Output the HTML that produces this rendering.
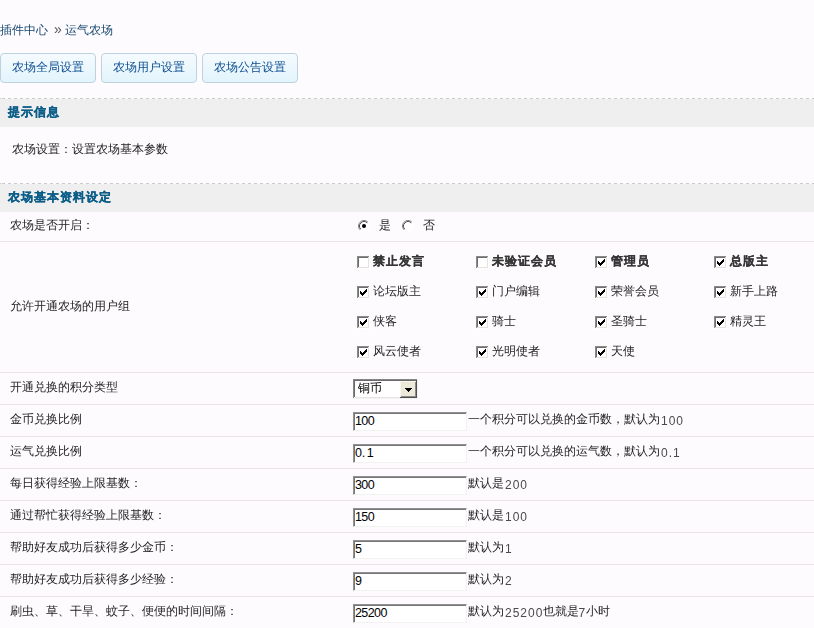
<!DOCTYPE html>
<html><head><meta charset="utf-8">
<style>
*{margin:0;padding:0;box-sizing:border-box}
html,body{width:814px;height:628px;overflow:hidden;background:#FEFBFE}
body{font-family:"Liberation Sans",sans-serif;font-size:12px;line-height:12px;color:#242424;position:relative}
.a{position:absolute;white-space:nowrap;will-change:transform}
.crumb{left:0;top:24px;color:#174870}
.sep{color:#555;font-size:14px;line-height:14px}
.btn{position:absolute;top:53px;height:30px;border:1px solid #BDD2DE;border-radius:4px;background:linear-gradient(#F5FBFE,#E2F4FC);color:#0E4E92;padding:7px 0 0 11px;will-change:transform;white-space:nowrap}
.band{position:absolute;left:0;width:814px;background:#F0EFEF}
.dash{position:absolute;left:0;width:814px;height:1px;background:repeating-linear-gradient(90deg,#CACACA 0 3px,transparent 3px 6px);background-position:2px 0}
.band span{position:absolute;left:8px;font-weight:bold;color:#0C5E88;letter-spacing:1px;will-change:transform;-webkit-text-stroke:0.3px #0C5E88}
.line{position:absolute;left:0;width:814px;height:1px;background:#E8E4E8}
.lbl{left:10px}
.b{font-weight:bold;letter-spacing:1px;color:#363636;-webkit-text-stroke:0.2px #363636}
.inp{position:absolute;left:353px;width:114px;height:19px;background:#fff;border-top:1px solid #919191;border-left:1px solid #919191;border-right:1px solid #F4F2F0;border-bottom:1px solid #F4F2F0;box-shadow:inset 1px 1px 0 #767676}
.inp>span{position:absolute;left:1px;top:2px;color:#000;letter-spacing:-0.6px;font-size:12.5px}
.sfx{left:468px}
.n{letter-spacing:1px;margin-left:1px;position:relative;top:2px;color:#4a4a4a}
</style></head><body>
<div class="a crumb">插件中心</div><div class="a sep" style="left:54px;top:22px">»</div><div class="a crumb" style="left:65px">运气农场</div>
<div class="btn" style="left:0;width:96px">农场全局设置</div>
<div class="btn" style="left:101px;width:96px">农场用户设置</div>
<div class="btn" style="left:202px;width:96px">农场公告设置</div>

<div class="dash" style="top:98px"></div><div class="band" style="top:99px;height:28px"><span style="top:7px">提示信息</span></div>
<div class="a" style="left:12px;top:143px">农场设置：设置农场基本参数</div>

<div class="dash" style="top:183px"></div><div class="band" style="top:184px;height:28px"><span style="top:7px">农场基本资料设定</span></div>

<div class="a lbl" style="top:219px">农场是否开启：</div>
<div class="a" style="left:358px;top:220px"><svg width="12" height="12" viewBox="0 0 12 12" style="display:block"><circle cx="6" cy="6" r="5.5" fill="#fff"/><path d="M2.11 9.89A5.5 5.5 0 0 1 9.89 2.11" stroke="#808080" stroke-width="1" fill="none"/><path d="M2.82 9.18A4.5 4.5 0 0 1 9.18 2.82" stroke="#505050" stroke-width="1" fill="none"/><circle cx="6" cy="6" r="2" fill="#000"/></svg></div>
<div class="a" style="left:379px;top:219px">是</div>
<div class="a" style="left:402px;top:220px"><svg width="12" height="12" viewBox="0 0 12 12" style="display:block"><circle cx="6" cy="6" r="5.5" fill="#fff"/><path d="M2.11 9.89A5.5 5.5 0 0 1 9.89 2.11" stroke="#808080" stroke-width="1" fill="none"/><path d="M2.82 9.18A4.5 4.5 0 0 1 9.18 2.82" stroke="#505050" stroke-width="1" fill="none"/></svg></div>
<div class="a" style="left:423px;top:219px">否</div>
<div class="line" style="top:241px"></div>
<div class="a lbl" style="top:300px">允许开通农场的用户组</div>
<div class="a" style="left:357px;top:256px"><svg width="13" height="13" viewBox="0 0 13 13" shape-rendering="crispEdges" style="display:block"><rect x="0" y="0" width="13" height="13" fill="#fff"/><rect x="0" y="0" width="12" height="1" fill="#8a8a8a"/><rect x="0" y="0" width="1" height="12" fill="#8a8a8a"/><rect x="1" y="1" width="10" height="1" fill="#6e6e6e"/><rect x="1" y="1" width="1" height="10" fill="#6e6e6e"/><rect x="1" y="11" width="11" height="1" fill="#E6E3DC"/><rect x="11" y="1" width="1" height="11" fill="#E6E3DC"/></svg></div><div class="a lb b" style="left:373px;top:255px">禁止发言</div>
<div class="a" style="left:476px;top:256px"><svg width="13" height="13" viewBox="0 0 13 13" shape-rendering="crispEdges" style="display:block"><rect x="0" y="0" width="13" height="13" fill="#fff"/><rect x="0" y="0" width="12" height="1" fill="#8a8a8a"/><rect x="0" y="0" width="1" height="12" fill="#8a8a8a"/><rect x="1" y="1" width="10" height="1" fill="#6e6e6e"/><rect x="1" y="1" width="1" height="10" fill="#6e6e6e"/><rect x="1" y="11" width="11" height="1" fill="#E6E3DC"/><rect x="11" y="1" width="1" height="11" fill="#E6E3DC"/></svg></div><div class="a lb b" style="left:492px;top:255px">未验证会员</div>
<div class="a" style="left:595px;top:256px"><svg width="13" height="13" viewBox="0 0 13 13" shape-rendering="crispEdges" style="display:block"><rect x="0" y="0" width="13" height="13" fill="#fff"/><rect x="0" y="0" width="12" height="1" fill="#8a8a8a"/><rect x="0" y="0" width="1" height="12" fill="#8a8a8a"/><rect x="1" y="1" width="10" height="1" fill="#6e6e6e"/><rect x="1" y="1" width="1" height="10" fill="#6e6e6e"/><rect x="1" y="11" width="11" height="1" fill="#E6E3DC"/><rect x="11" y="1" width="1" height="11" fill="#E6E3DC"/><path d="M9 3h1v1h-1zM8 4h2v1h-2zM3 5h1v1h-1zM7 5h3v1h-3zM3 6h2v1h-2zM6 6h3v1h-3zM3 7h5v1h-5zM4 8h3v1h-3zM5 9h1v1h-1z" fill="#000"/></svg></div><div class="a lb b" style="left:611px;top:255px">管理员</div>
<div class="a" style="left:714px;top:256px"><svg width="13" height="13" viewBox="0 0 13 13" shape-rendering="crispEdges" style="display:block"><rect x="0" y="0" width="13" height="13" fill="#fff"/><rect x="0" y="0" width="12" height="1" fill="#8a8a8a"/><rect x="0" y="0" width="1" height="12" fill="#8a8a8a"/><rect x="1" y="1" width="10" height="1" fill="#6e6e6e"/><rect x="1" y="1" width="1" height="10" fill="#6e6e6e"/><rect x="1" y="11" width="11" height="1" fill="#E6E3DC"/><rect x="11" y="1" width="1" height="11" fill="#E6E3DC"/><path d="M9 3h1v1h-1zM8 4h2v1h-2zM3 5h1v1h-1zM7 5h3v1h-3zM3 6h2v1h-2zM6 6h3v1h-3zM3 7h5v1h-5zM4 8h3v1h-3zM5 9h1v1h-1z" fill="#000"/></svg></div><div class="a lb b" style="left:730px;top:255px">总版主</div>
<div class="a" style="left:357px;top:286px"><svg width="13" height="13" viewBox="0 0 13 13" shape-rendering="crispEdges" style="display:block"><rect x="0" y="0" width="13" height="13" fill="#fff"/><rect x="0" y="0" width="12" height="1" fill="#8a8a8a"/><rect x="0" y="0" width="1" height="12" fill="#8a8a8a"/><rect x="1" y="1" width="10" height="1" fill="#6e6e6e"/><rect x="1" y="1" width="1" height="10" fill="#6e6e6e"/><rect x="1" y="11" width="11" height="1" fill="#E6E3DC"/><rect x="11" y="1" width="1" height="11" fill="#E6E3DC"/><path d="M9 3h1v1h-1zM8 4h2v1h-2zM3 5h1v1h-1zM7 5h3v1h-3zM3 6h2v1h-2zM6 6h3v1h-3zM3 7h5v1h-5zM4 8h3v1h-3zM5 9h1v1h-1z" fill="#000"/></svg></div><div class="a lb" style="left:373px;top:285px">论坛版主</div>
<div class="a" style="left:476px;top:286px"><svg width="13" height="13" viewBox="0 0 13 13" shape-rendering="crispEdges" style="display:block"><rect x="0" y="0" width="13" height="13" fill="#fff"/><rect x="0" y="0" width="12" height="1" fill="#8a8a8a"/><rect x="0" y="0" width="1" height="12" fill="#8a8a8a"/><rect x="1" y="1" width="10" height="1" fill="#6e6e6e"/><rect x="1" y="1" width="1" height="10" fill="#6e6e6e"/><rect x="1" y="11" width="11" height="1" fill="#E6E3DC"/><rect x="11" y="1" width="1" height="11" fill="#E6E3DC"/><path d="M9 3h1v1h-1zM8 4h2v1h-2zM3 5h1v1h-1zM7 5h3v1h-3zM3 6h2v1h-2zM6 6h3v1h-3zM3 7h5v1h-5zM4 8h3v1h-3zM5 9h1v1h-1z" fill="#000"/></svg></div><div class="a lb" style="left:492px;top:285px">门户编辑</div>
<div class="a" style="left:595px;top:286px"><svg width="13" height="13" viewBox="0 0 13 13" shape-rendering="crispEdges" style="display:block"><rect x="0" y="0" width="13" height="13" fill="#fff"/><rect x="0" y="0" width="12" height="1" fill="#8a8a8a"/><rect x="0" y="0" width="1" height="12" fill="#8a8a8a"/><rect x="1" y="1" width="10" height="1" fill="#6e6e6e"/><rect x="1" y="1" width="1" height="10" fill="#6e6e6e"/><rect x="1" y="11" width="11" height="1" fill="#E6E3DC"/><rect x="11" y="1" width="1" height="11" fill="#E6E3DC"/><path d="M9 3h1v1h-1zM8 4h2v1h-2zM3 5h1v1h-1zM7 5h3v1h-3zM3 6h2v1h-2zM6 6h3v1h-3zM3 7h5v1h-5zM4 8h3v1h-3zM5 9h1v1h-1z" fill="#000"/></svg></div><div class="a lb" style="left:611px;top:285px">荣誉会员</div>
<div class="a" style="left:714px;top:286px"><svg width="13" height="13" viewBox="0 0 13 13" shape-rendering="crispEdges" style="display:block"><rect x="0" y="0" width="13" height="13" fill="#fff"/><rect x="0" y="0" width="12" height="1" fill="#8a8a8a"/><rect x="0" y="0" width="1" height="12" fill="#8a8a8a"/><rect x="1" y="1" width="10" height="1" fill="#6e6e6e"/><rect x="1" y="1" width="1" height="10" fill="#6e6e6e"/><rect x="1" y="11" width="11" height="1" fill="#E6E3DC"/><rect x="11" y="1" width="1" height="11" fill="#E6E3DC"/><path d="M9 3h1v1h-1zM8 4h2v1h-2zM3 5h1v1h-1zM7 5h3v1h-3zM3 6h2v1h-2zM6 6h3v1h-3zM3 7h5v1h-5zM4 8h3v1h-3zM5 9h1v1h-1z" fill="#000"/></svg></div><div class="a lb" style="left:730px;top:285px">新手上路</div>
<div class="a" style="left:357px;top:316px"><svg width="13" height="13" viewBox="0 0 13 13" shape-rendering="crispEdges" style="display:block"><rect x="0" y="0" width="13" height="13" fill="#fff"/><rect x="0" y="0" width="12" height="1" fill="#8a8a8a"/><rect x="0" y="0" width="1" height="12" fill="#8a8a8a"/><rect x="1" y="1" width="10" height="1" fill="#6e6e6e"/><rect x="1" y="1" width="1" height="10" fill="#6e6e6e"/><rect x="1" y="11" width="11" height="1" fill="#E6E3DC"/><rect x="11" y="1" width="1" height="11" fill="#E6E3DC"/><path d="M9 3h1v1h-1zM8 4h2v1h-2zM3 5h1v1h-1zM7 5h3v1h-3zM3 6h2v1h-2zM6 6h3v1h-3zM3 7h5v1h-5zM4 8h3v1h-3zM5 9h1v1h-1z" fill="#000"/></svg></div><div class="a lb" style="left:373px;top:315px">侠客</div>
<div class="a" style="left:476px;top:316px"><svg width="13" height="13" viewBox="0 0 13 13" shape-rendering="crispEdges" style="display:block"><rect x="0" y="0" width="13" height="13" fill="#fff"/><rect x="0" y="0" width="12" height="1" fill="#8a8a8a"/><rect x="0" y="0" width="1" height="12" fill="#8a8a8a"/><rect x="1" y="1" width="10" height="1" fill="#6e6e6e"/><rect x="1" y="1" width="1" height="10" fill="#6e6e6e"/><rect x="1" y="11" width="11" height="1" fill="#E6E3DC"/><rect x="11" y="1" width="1" height="11" fill="#E6E3DC"/><path d="M9 3h1v1h-1zM8 4h2v1h-2zM3 5h1v1h-1zM7 5h3v1h-3zM3 6h2v1h-2zM6 6h3v1h-3zM3 7h5v1h-5zM4 8h3v1h-3zM5 9h1v1h-1z" fill="#000"/></svg></div><div class="a lb" style="left:492px;top:315px">骑士</div>
<div class="a" style="left:595px;top:316px"><svg width="13" height="13" viewBox="0 0 13 13" shape-rendering="crispEdges" style="display:block"><rect x="0" y="0" width="13" height="13" fill="#fff"/><rect x="0" y="0" width="12" height="1" fill="#8a8a8a"/><rect x="0" y="0" width="1" height="12" fill="#8a8a8a"/><rect x="1" y="1" width="10" height="1" fill="#6e6e6e"/><rect x="1" y="1" width="1" height="10" fill="#6e6e6e"/><rect x="1" y="11" width="11" height="1" fill="#E6E3DC"/><rect x="11" y="1" width="1" height="11" fill="#E6E3DC"/><path d="M9 3h1v1h-1zM8 4h2v1h-2zM3 5h1v1h-1zM7 5h3v1h-3zM3 6h2v1h-2zM6 6h3v1h-3zM3 7h5v1h-5zM4 8h3v1h-3zM5 9h1v1h-1z" fill="#000"/></svg></div><div class="a lb" style="left:611px;top:315px">圣骑士</div>
<div class="a" style="left:714px;top:316px"><svg width="13" height="13" viewBox="0 0 13 13" shape-rendering="crispEdges" style="display:block"><rect x="0" y="0" width="13" height="13" fill="#fff"/><rect x="0" y="0" width="12" height="1" fill="#8a8a8a"/><rect x="0" y="0" width="1" height="12" fill="#8a8a8a"/><rect x="1" y="1" width="10" height="1" fill="#6e6e6e"/><rect x="1" y="1" width="1" height="10" fill="#6e6e6e"/><rect x="1" y="11" width="11" height="1" fill="#E6E3DC"/><rect x="11" y="1" width="1" height="11" fill="#E6E3DC"/><path d="M9 3h1v1h-1zM8 4h2v1h-2zM3 5h1v1h-1zM7 5h3v1h-3zM3 6h2v1h-2zM6 6h3v1h-3zM3 7h5v1h-5zM4 8h3v1h-3zM5 9h1v1h-1z" fill="#000"/></svg></div><div class="a lb" style="left:730px;top:315px">精灵王</div>
<div class="a" style="left:357px;top:346px"><svg width="13" height="13" viewBox="0 0 13 13" shape-rendering="crispEdges" style="display:block"><rect x="0" y="0" width="13" height="13" fill="#fff"/><rect x="0" y="0" width="12" height="1" fill="#8a8a8a"/><rect x="0" y="0" width="1" height="12" fill="#8a8a8a"/><rect x="1" y="1" width="10" height="1" fill="#6e6e6e"/><rect x="1" y="1" width="1" height="10" fill="#6e6e6e"/><rect x="1" y="11" width="11" height="1" fill="#E6E3DC"/><rect x="11" y="1" width="1" height="11" fill="#E6E3DC"/><path d="M9 3h1v1h-1zM8 4h2v1h-2zM3 5h1v1h-1zM7 5h3v1h-3zM3 6h2v1h-2zM6 6h3v1h-3zM3 7h5v1h-5zM4 8h3v1h-3zM5 9h1v1h-1z" fill="#000"/></svg></div><div class="a lb" style="left:373px;top:345px">风云使者</div>
<div class="a" style="left:476px;top:346px"><svg width="13" height="13" viewBox="0 0 13 13" shape-rendering="crispEdges" style="display:block"><rect x="0" y="0" width="13" height="13" fill="#fff"/><rect x="0" y="0" width="12" height="1" fill="#8a8a8a"/><rect x="0" y="0" width="1" height="12" fill="#8a8a8a"/><rect x="1" y="1" width="10" height="1" fill="#6e6e6e"/><rect x="1" y="1" width="1" height="10" fill="#6e6e6e"/><rect x="1" y="11" width="11" height="1" fill="#E6E3DC"/><rect x="11" y="1" width="1" height="11" fill="#E6E3DC"/><path d="M9 3h1v1h-1zM8 4h2v1h-2zM3 5h1v1h-1zM7 5h3v1h-3zM3 6h2v1h-2zM6 6h3v1h-3zM3 7h5v1h-5zM4 8h3v1h-3zM5 9h1v1h-1z" fill="#000"/></svg></div><div class="a lb" style="left:492px;top:345px">光明使者</div>
<div class="a" style="left:595px;top:346px"><svg width="13" height="13" viewBox="0 0 13 13" shape-rendering="crispEdges" style="display:block"><rect x="0" y="0" width="13" height="13" fill="#fff"/><rect x="0" y="0" width="12" height="1" fill="#8a8a8a"/><rect x="0" y="0" width="1" height="12" fill="#8a8a8a"/><rect x="1" y="1" width="10" height="1" fill="#6e6e6e"/><rect x="1" y="1" width="1" height="10" fill="#6e6e6e"/><rect x="1" y="11" width="11" height="1" fill="#E6E3DC"/><rect x="11" y="1" width="1" height="11" fill="#E6E3DC"/><path d="M9 3h1v1h-1zM8 4h2v1h-2zM3 5h1v1h-1zM7 5h3v1h-3zM3 6h2v1h-2zM6 6h3v1h-3zM3 7h5v1h-5zM4 8h3v1h-3zM5 9h1v1h-1z" fill="#000"/></svg></div><div class="a lb" style="left:611px;top:345px">天使</div>

<div class="line" style="top:372px"></div>
<div class="a lbl" style="top:381px">开通兑换的积分类型</div>
<div class="a sel" style="left:353px;top:379px;width:65px;height:20px">
<svg width="65" height="20" viewBox="0 0 65 20" shape-rendering="crispEdges" style="display:block">
<rect x="0" y="0" width="65" height="20" fill="#fff"/>
<rect x="0" y="0" width="64" height="1" fill="#858585"/><rect x="0" y="0" width="1" height="19" fill="#858585"/>
<rect x="1" y="1" width="62" height="1" fill="#6a6a6a"/><rect x="1" y="1" width="1" height="17" fill="#6a6a6a"/>
<rect x="0" y="19" width="65" height="1" fill="#F4F2F0"/><rect x="64" y="0" width="1" height="20" fill="#F4F2F0"/>
<rect x="2" y="18" width="45" height="1" fill="#E8E6E2"/>
<rect x="47" y="2" width="17" height="17" fill="#ECE9D8"/>
<rect x="47" y="2" width="16" height="1" fill="#F8F7F2"/><rect x="47" y="2" width="1" height="16" fill="#F8F7F2"/>
<rect x="47" y="18" width="17" height="1" fill="#505050"/><rect x="63" y="1" width="1" height="18" fill="#505050"/>
<rect x="48" y="17" width="15" height="1" fill="#8a8a8a"/><rect x="62" y="3" width="1" height="15" fill="#8a8a8a"/>
<path d="M52 9h7v1h-7zM53 10h5v1h-5zM54 11h3v1h-3zM55 12h1v1h-1z" fill="#000"/>
</svg></div>
<div class="a" style="left:358px;top:382px;color:#000">铜币</div>
<div class="line" style="top:404px"></div>
<div class="a lbl" style="top:413px">金币兑换比例</div>
<div class="inp" style="top:412px"><span>100</span></div><div class="a sfx" style="top:413px">一个积分可以兑换的金币数，默认为<span class="n">100</span></div>
<div class="line" style="top:436px"></div>
<div class="a lbl" style="top:445px">运气兑换比例</div>
<div class="inp" style="top:444px"><span>0<span style="margin:0 2px 0 0.5px">.</span>1</span></div><div class="a sfx" style="top:445px">一个积分可以兑换的运气数，默认为<span class="n">0.1</span></div>
<div class="line" style="top:468px"></div>
<div class="a lbl" style="top:477px">每日获得经验上限基数：</div>
<div class="inp" style="top:476px"><span>300</span></div><div class="a sfx" style="top:477px">默认是<span class="n">200</span></div>
<div class="line" style="top:500px"></div>
<div class="a lbl" style="top:509px">通过帮忙获得经验上限基数：</div>
<div class="inp" style="top:508px"><span>150</span></div><div class="a sfx" style="top:509px">默认是<span class="n">100</span></div>
<div class="line" style="top:532px"></div>
<div class="a lbl" style="top:541px">帮助好友成功后获得多少金币：</div>
<div class="inp" style="top:540px"><span>5</span></div><div class="a sfx" style="top:541px">默认为<span class="n">1</span></div>
<div class="line" style="top:564px"></div>
<div class="a lbl" style="top:573px">帮助好友成功后获得多少经验：</div>
<div class="inp" style="top:572px"><span>9</span></div><div class="a sfx" style="top:573px">默认为<span class="n">2</span></div>
<div class="line" style="top:596px"></div>
<div class="a lbl" style="top:605px">刷虫、草、干旱、蚊子、便便的时间间隔：</div>
<div class="inp" style="top:604px"><span>25200</span></div><div class="a sfx" style="top:605px">默认为<span class="n">25200</span>也就是<span class="n" style="margin-left:-1px">7</span>小时</div>

</body></html>
